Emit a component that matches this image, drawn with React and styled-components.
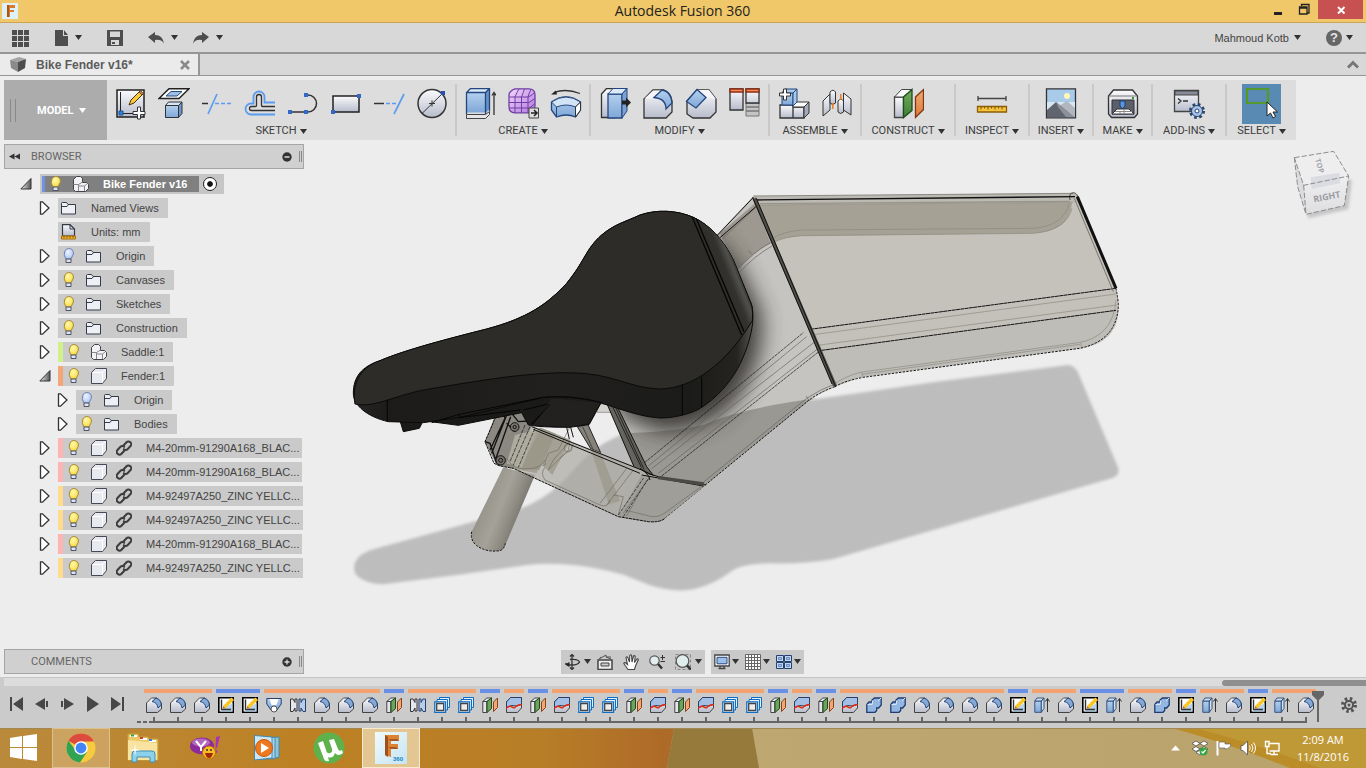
import React from 'react'
import styled, { createGlobalStyle } from 'styled-components'

const GlobalStyle = createGlobalStyle`
  * {
    box-sizing: border-box;
  }
  body {
    margin: 0;
    font-family: "Liberation Sans", Arial, sans-serif;
    font-size: 11px;
    color: #444;
    background: #ededed;
  }
  button {
    font: inherit;
    color: inherit;
    background: transparent;
    border: 0;
    padding: 0;
    cursor: pointer;
  }
  ul {
    list-style: none;
    margin: 0;
    padding: 0;
  }
  svg {
    display: block;
    flex: none;
  }
`

// gradients shared by all the icons
const Gradients = () => (
  <HiddenSvg width="0" height="0" aria-hidden="true">
    <defs>
      <linearGradient id="steel" x1="0" y1="0" x2="0" y2="1">
        <stop offset="0" stopColor="#fbfbfd" />
        <stop offset="1" stopColor="#b7bccb" />
      </linearGradient>
      <linearGradient id="sky" x1="0" y1="0" x2="0" y2="1">
        <stop offset="0" stopColor="#b4d0ee" />
        <stop offset="1" stopColor="#7fa7d8" />
      </linearGradient>
      <linearGradient id="violet" x1="0" y1="0" x2="1" y2="1">
        <stop offset="0" stopColor="#f3d6fb" />
        <stop offset="1" stopColor="#b377dd" />
      </linearGradient>
      <linearGradient id="green" x1="0" y1="0" x2="0" y2="1">
        <stop offset="0" stopColor="#74ad61" />
        <stop offset="1" stopColor="#3f7f33" />
      </linearGradient>
      <linearGradient id="orange" x1="0" y1="0" x2="0" y2="1">
        <stop offset="0" stopColor="#f3aa70" />
        <stop offset="1" stopColor="#dd7a3c" />
      </linearGradient>
      <radialGradient id="bulbOn" cx=".4" cy=".35" r=".7">
        <stop offset="0" stopColor="#fffbb0" />
        <stop offset="1" stopColor="#f8d838" />
      </radialGradient>
      <radialGradient id="bulbOff" cx=".4" cy=".35" r=".7">
        <stop offset="0" stopColor="#eef4ff" />
        <stop offset="1" stopColor="#a9c3f3" />
      </radialGradient>
      <linearGradient id="twist" x1="0" y1="0" x2="1" y2="0">
        <stop offset="0" stopColor="#eee" />
        <stop offset="1" stopColor="#555" />
      </linearGradient>
    </defs>
  </HiddenSvg>
)

const Svg = ({ size = 16, w, h, children, ...rest }) => (
  <svg width={w || size} height={h || size} viewBox={`0 0 ${w || size} ${h || size}`} fill="none" aria-hidden="true" {...rest}>
    {children}
  </svg>
)

const Caret = ({ color = '#333' }) => (
  <Svg w={7} h={5}><path d="M0 0h7L3.500 5z" fill={color} /></Svg>
)

const Gear = ({ cx, cy, r, color, hole, fill = 'none' }) => (
  <g>
    <circle cx={cx} cy={cy} r={r} stroke={color} strokeWidth="4" strokeDasharray={`${(r * Math.PI) / 8} ${(r * Math.PI) / 8}`} />
    <circle cx={cx} cy={cy} r={r - 2} fill={fill} stroke={color} strokeWidth="2" />
    <circle cx={cx} cy={cy} r="1.500" fill={hole} />
  </g>
)

// 32px toolbar icons
const big = {
  newSketch: (
    <>
      <path d="M2 2h27v27H2z" fill="url(#steel)" stroke="#222" strokeWidth="1.500" />
      <path d="M5.500 4v21.500H18" stroke="#222" />
      <path d="M4 23h4v4H4z" fill="#2d83d8" stroke="#1b559a" />
      <path d="M14 17l2-5L25 3l3 3-9 9z" fill="#f7c93c" stroke="#4a3205" />
      <path d="M24 4l1.500-1.500 3 3L27 7z" fill="#c37c4e" stroke="#4a3205" strokeWidth=".7" />
      <path d="M22.500 19h3v4.500H30v3h-4.500V31h-3v-4.500H18v-3h4.500z" fill="#fff" stroke="#333" />
    </>
  ),
  sketchPlane: (
    <>
      <path d="M1 10.500L11 .8h20l-10 9.700z" fill="#fff" stroke="#222" strokeWidth="1.500" />
      <path d="M8 8l5-4.500h11L19 8z" fill="#9fc0e6" stroke="#27497e" />
      <path d="M7.500 17.500h13v12h-13z" fill="url(#sky)" stroke="#333" />
      <path d="M7.500 17.500l3-3.500h13.500l-3.500 3.500z" fill="#d7e5f6" stroke="#333" />
      <path d="M20.500 17.500L24 14v11.500l-3.500 4z" fill="#6f96c8" stroke="#333" />
    </>
  ),
  trim: (
    <>
      <path d="M1 15.500h6" stroke="#333" strokeWidth="1.500" />
      <path d="M7 26L16 6" stroke="#5b9cf0" strokeWidth="1.700" />
      <path d="M14 15.500h17" stroke="#5b9cf0" strokeWidth="1.700" strokeDasharray="4 2" />
    </>
  ),
  offset: (
    <>
      <path d="M31 26.500H7a5.500 5.500 0 0 1 0-11h2.500V9a5.500 5.500 0 0 1 11 0v5.500H31" stroke="#5b9cf0" strokeWidth="1.800" />
      <path d="M31 22.500H7.500a2 2 0 0 1 0-4h4a1 1 0 0 0 1-1V9a2.500 2.500 0 0 1 5 0v8.500a1 1 0 0 0 1 1H31" stroke="#333" strokeWidth="1.300" />
    </>
  ),
  line: (
    <>
      <path d="M3 24h18a8.300 8.300 0 0 0 0-17h-2" stroke="#333" strokeWidth="1.500" />
      <path d="M1 22h4v4H1zM17 22h4v4h-4zM17 5h4v4h-4z" fill="#3468c8" />
    </>
  ),
  rect: (
    <>
      <path d="M3 8h26v16H3z" fill="url(#steel)" stroke="#222" strokeWidth="1.500" />
      <path d="M27 6h4v4h-4zM1 22h4v4H1z" fill="#3468c8" />
    </>
  ),
  extend: (
    <>
      <path d="M1 15.500h10" stroke="#333" strokeWidth="1.500" />
      <path d="M13 15.500h11" stroke="#5b9cf0" strokeWidth="1.700" strokeDasharray="4 2" />
      <path d="M21 26L31 6" stroke="#5b9cf0" strokeWidth="1.700" />
    </>
  ),
  circle: (
    <>
      <circle cx="16" cy="15.500" r="14" fill="url(#steel)" stroke="#333" strokeWidth="1.500" />
      <path d="M6 25.500L27 5M13 15.500h6M16 12.500v6" stroke="#333" />
      <path d="M25 3h4v4h-4z" fill="#2650b4" />
    </>
  ),
  extrude: (
    <>
      <path d="M2.500 26.500h19l4-3v3l-4 4h-19z" fill="#e6e6ea" stroke="#444" />
      <path d="M2.500 4.500h19v20h-19z" fill="url(#sky)" />
      <path d="M2.500 4.500l4-4h19l-4 4z" fill="#dce9f8" />
      <path d="M21.500 4.500l4-4v20l-4 5z" fill="#6791c8" />
      <path d="M2.500 26V4.500l4-4h19V23M2.500 4.500h19V26M21.500 4.500l4-4" stroke="#24467e" strokeWidth="1.300" />
      <path d="M30 27V5M28 7.500l2-3 2 3" stroke="#333" strokeWidth="1.300" />
    </>
  ),
  form: (
    <>
      <path d="M8 .8h14q6 0 6 6v11q0 4-3 7H8q-6 0-6-6V7q0-4 6-6.200z" fill="url(#violet)" stroke="#6d3fa5" strokeWidth="1.300" />
      <path d="M2.500 9h19q4-2 6.500-5M2 14.500h20l6-4M2.500 20h20l5-4M8 25V9q2-5 4-8M14.500 25V9q2-5 3-8M21 25V9q1-4 3-7.500" stroke="#6d3fa5" />
      <path d="M22 20h9.500v10H22z" fill="#ddd" stroke="#444" />
      <path d="M24 25h5M27 22l3 3-3 3" stroke="#222" strokeWidth="1.500" />
    </>
  ),
  revolve: (
    <>
      <path d="M1.500 14Q16 4 30.500 14v8l-5 7q-9-4-19 0l-5-7z" fill="url(#sky)" stroke="#24467e" strokeWidth="1.300" />
      <path d="M1.500 14Q16 4 30.500 14l-5 5q-9-4-19 0z" fill="#d3e4f6" stroke="#24467e" />
      <path d="M25.500 19l5-5v8l-5 7z" fill="#fff" stroke="#333" />
      <path d="M6.500 19v10" stroke="#24467e" />
      <path d="M30 5.500Q16 0 4 4.500" stroke="#333" strokeWidth="1.300" />
      <path d="M1 6.500l5-4 1 4z" fill="#222" />
    </>
  ),
  pressPull: (
    <>
      <path d="M2.500 6l5-5.500h8v29h-13z" fill="url(#steel)" stroke="#333" strokeWidth="1.300" />
      <path d="M9 6h14v24H9z" fill="url(#sky)" stroke="#24467e" strokeWidth="1.300" />
      <path d="M9 6l5-5.500h14L23 6z" fill="#dce9f8" stroke="#24467e" />
      <path d="M23 6l5-5.500V23l-5 7z" fill="#7ba1d3" stroke="#24467e" />
      <path d="M23 12.500h4V9.500l5 5-5 5v-3h-4z" fill="#222" />
    </>
  ),
  fillet: (
    <>
      <path d="M2 30V11l9-9h11q7 3 8 11v11l-6 6z" fill="url(#steel)" stroke="#333" strokeWidth="1.300" />
      <path d="M2.500 10.500L11 2.500h9l-8 8z" fill="#f6f6f8" />
      <path d="M12 9.500l8-7.500q9 1 10 13l-6 6q0-10.500-12-11.500z" fill="url(#sky)" stroke="#24467e" strokeWidth="1.300" />
    </>
  ),
  chamfer: (
    <>
      <path d="M2 13L12 2h12l7 9v13l-6 6H8l-6-4z" fill="url(#steel)" stroke="#333" strokeWidth="1.300" />
      <path d="M12 2h12l7 9-9-1z" fill="#f5f5f8" />
      <path d="M1.500 13.500L12 1.500l9 8L11 20z" fill="url(#sky)" stroke="#24467e" strokeWidth="1.300" />
    </>
  ),
  params: (
    <>
      <path d="M18 15h13v4H18zM18 19h13v4H18zM18 23h13v5H18z" fill="#c4c4c6" stroke="#777" />
      <path d="M2 1h13v21H2zM18 1h13v14H18z" fill="url(#steel)" stroke="#333" strokeWidth="1.300" />
      <path d="M2 1h13v3H2zM18 1h13v3H18z" fill="#ff8f54" stroke="#8a2a14" strokeWidth="1.300" />
    </>
  ),
  component: (
    <>
      <path d="M2 17h13v13H2zM15 19h11v11H15z" fill="url(#steel)" stroke="#333" strokeWidth="1.300" />
      <path d="M15 18l4-4h12l-5 5H15z" fill="#fff" stroke="#333" />
      <path d="M26 19l5-5v11l-5 5z" fill="#a5aabb" stroke="#333" />
      <path d="M4 5h11v12H4z" fill="url(#sky)" stroke="#24467e" />
      <path d="M4 5l3-4h12l-4 4zM15 5l4-4v13l-4 4z" fill="#a9c7ea" stroke="#24467e" />
      <path d="M5.500 1h3v4h4v3h-4v4h-3V8h-4V5h4z" fill="#fff" stroke="#333" />
    </>
  ),
  joint: (
    <>
      <path d="M2 13l7-7v16l-7 6z" fill="url(#steel)" stroke="#333" />
      <path d="M9 4q3-3.500 5.500 0v11q-3 3-5.500 0z" fill="url(#steel)" stroke="#333" />
      <path d="M17 13q3-3.500 5.500 0v11q-3 3-5.500 0z" fill="url(#steel)" stroke="#333" />
      <path d="M22.500 5l7.500 6v16l-7.500-5z" fill="url(#steel)" stroke="#333" />
      <path d="M11.800 15v6M19.800 6v6" stroke="#f07a1e" strokeWidth="1.500" />
    </>
  ),
  construct: (
    <>
      <path d="M2.500 9h9v20.500h-9z" fill="url(#steel)" stroke="#444" strokeWidth="1.300" />
      <path d="M2.500 9l7-7.500H20L11.500 9z" fill="#fafafa" stroke="#444" />
      <path d="M11.500 9L20 1.500v21l-8.500 7z" fill="url(#green)" stroke="#1f4d1a" strokeWidth="1.300" />
      <path d="M23.500 9L31.500 1.500v20l-8 8z" fill="url(#orange)" stroke="#7d3512" strokeWidth="1.300" />
    </>
  ),
  inspect: (
    <>
      <path d="M2 10.500h28M2 8v5M30 8v5" stroke="#444" strokeWidth="1.300" />
      <path d="M1.500 18.500h29V24h-29z" fill="#f4c53a" stroke="#8c5c08" strokeWidth="1.300" />
      <path d="M5 19v2.500M8.500 19v1.500M12 19v2.500M15.500 19v1.500M19 19v2.500M22.500 19v1.500M26 19v2.500" stroke="#7a5208" />
    </>
  ),
  insert: (
    <>
      <path d="M1.500 .8h29v29h-29z" fill="#a7cbe8" stroke="#333" strokeWidth="1.300" />
      <path d="M2 14h28v15H2z" fill="#d6e7f3" />
      <circle cx="22" cy="8" r="3" fill="#fff6b8" />
      <path d="M14 18l8-5 8 7v9H18z" fill="#b1b7bf" />
      <path d="M2 22l9-8 18 15H2z" fill="#60646e" />
      <path d="M11 14l18 15h-8L13 19z" fill="#8c919b" />
    </>
  ),
  make: (
    <>
      <path d="M1.500 8l5-6h19l5 6v18l-3 3.500h-23l-3-3.500z" fill="url(#steel)" stroke="#333" strokeWidth="1.300" />
      <path d="M1.500 8h29" stroke="#777" />
      <path d="M5 12h22v14H5z" fill="#5b5f6b" stroke="#333" />
      <path d="M5 26l5-5h12l5 5z" fill="#fff" stroke="#333" />
      <path d="M13 23v3M17 21v5M8 23.500h17" stroke="#888" />
      <path d="M13 13h5v5l-2.500 3L13 18z" fill="#5a95da" stroke="#1d3f78" />
      <path d="M25 9h2v2h-2z" fill="#2d9c2d" />
    </>
  ),
  addins: (
    <>
      <path d="M1.500 2.500h24v21h-24z" fill="url(#steel)" stroke="#444" strokeWidth="1.300" />
      <path d="M2 3h23v4H2z" fill="#878c98" stroke="#444" />
      <path d="M5 10.500l3 2.500-3 2.500M10 13h5" stroke="#333" strokeWidth="1.300" />
      <circle cx="24" cy="23" r="6.500" stroke="#27446f" strokeWidth="3" strokeDasharray="2.600 2.500" />
      <circle cx="24" cy="23" r="5.500" fill="#a8c4e8" stroke="#27446f" />
      <circle cx="24" cy="23" r="2" fill="#fff" stroke="#27446f" />
    </>
  ),
  select: (
    <>
      <path d="M1 1h21v14H1z" stroke="#53a000" strokeWidth="1.700" />
      <path d="M21 14v14l3.500-3 2.500 5 2.500-1.500-2.500-4.500h4.500z" fill="#fff" stroke="#222" />
    </>
  ),
}

const toolGroups = [
  { label: 'SKETCH', width: 350, tools: ['newSketch', 'sketchPlane', 'trim', 'offset', 'line', 'rect', 'extend', 'circle'] },
  { label: 'CREATE', width: 134, tools: ['extrude', 'form', 'revolve'] },
  { label: 'MODIFY', width: 179, tools: ['pressPull', 'fillet', 'chamfer', 'params'] },
  { label: 'ASSEMBLE', width: 92, tools: ['component', 'joint'] },
  { label: 'CONSTRUCT', width: 94, tools: ['construct'] },
  { label: 'INSPECT', width: 74, tools: ['inspect'] },
  { label: 'INSERT', width: 64, tools: ['insert'] },
  { label: 'MAKE', width: 59, tools: ['make'] },
  { label: 'ADD-INS', width: 74, tools: ['addins'] },
  { label: 'SELECT', width: 69, tools: ['select'] },
]

// 16px icons of the browser tree
const small = {
  bulbOn: (
    <>
      <path d="M3.500 5a4.500 4.500 0 1 1 8 2.800L10 11H5L3.500 7.800A4.500 4.500 0 0 1 3.500 5z" fill="url(#bulbOn)" stroke="#a8853a" />
      <path d="M5 11h5v3.500H5z" fill="#dfe3ee" stroke="#4f5565" />
    </>
  ),
  bulbOff: (
    <>
      <path d="M3.500 5a4.500 4.500 0 1 1 8 2.800L10 11H5L3.500 7.800A4.500 4.500 0 0 1 3.500 5z" fill="url(#bulbOff)" stroke="#6a80b4" />
      <path d="M5 11h5v3.500H5z" fill="#dfe3ee" stroke="#4f5565" />
    </>
  ),
  folder: (
    <>
      <path d="M.5 3.500Q.5 2.500 1.500 2.500H5.500L7 4.500h7.500v9.500H.5z" fill="#eef0f5" stroke="#333a48" />
      <path d="M.5 6.500H6L7.500 4.500" stroke="#333a48" />
    </>
  ),
  units: (
    <>
      <path d="M1.500 .7H9L13.500 5v7h-12z" fill="url(#steel)" stroke="#333a48" strokeWidth="1.200" />
      <path d="M9 .7V5h4.500" stroke="#333a48" />
      <path d="M.5 12h14v3H.5z" fill="#f4b92c" stroke="#a86c08" />
      <path d="M3 12v2M6 12v2M9 12v2M12 12v2" stroke="#8a5a08" />
    </>
  ),
  assembly: (
    <>
      <path d="M.5 3.500l3-3h4l2 2V6.500h4l2 2v4l-3 3h-10l-2-2z" fill="#f2f2f6" stroke="#444" />
      <path d="M.5 8.500h5l4-2.500M5.500 8.500v6.500M6 10h5.500l3-2.500M11.500 10v5" stroke="#888" />
    </>
  ),
  body: (
    <>
      <path d="M.5 4.500l4-4h11v10l-4 5H.5z" fill="#e9eaef" stroke="#444a55" />
      <path d="M1.500 4.500h10v10M11.500 4.500l3-3" stroke="#fff" />
    </>
  ),
  link: (
    <g stroke="#3c3c3c" strokeWidth="2" strokeLinecap="round">
      <path d="M7.500 5.500l3-3.200a2.700 2.700 0 0 1 4 3.700l-3 3.200a2.600 2.600 0 0 1-3.700 0" />
      <path d="M8.500 10.500l-3 3.200a2.700 2.700 0 0 1-4-3.700l3-3.200a2.600 2.600 0 0 1 3.700 0" />
    </g>
  ),
}

const tree = [
  { name: 'Named Views', level: 1, icons: ['folder'] },
  { name: 'Units: mm', level: 1, icons: ['units'], leaf: true },
  { name: 'Origin', level: 1, icons: ['bulbOff', 'folder'] },
  { name: 'Canvases', level: 1, icons: ['bulbOn', 'folder'] },
  { name: 'Sketches', level: 1, icons: ['bulbOn', 'folder'] },
  { name: 'Construction', level: 1, icons: ['bulbOn', 'folder'] },
  { name: 'Saddle:1', level: 1, icons: ['bulbOn', 'assembly'], bar: '#d0f08c' },
  { name: 'Fender:1', level: 1, icons: ['bulbOn', 'body'], bar: '#f4a677', open: true },
  { name: 'Origin', level: 2, icons: ['bulbOff', 'folder'] },
  { name: 'Bodies', level: 2, icons: ['bulbOn', 'folder'] },
  { name: 'M4-20mm-91290A168_BLAC...', level: 1, icons: ['bulbOn', 'body', 'link'], bar: '#ffb4b4', long: true },
  { name: 'M4-20mm-91290A168_BLAC...', level: 1, icons: ['bulbOn', 'body', 'link'], bar: '#ffb4b4', long: true },
  { name: 'M4-92497A250_ZINC YELLC...', level: 1, icons: ['bulbOn', 'body', 'link'], bar: '#ffdc8c', long: true },
  { name: 'M4-92497A250_ZINC YELLC...', level: 1, icons: ['bulbOn', 'body', 'link'], bar: '#ffdc8c', long: true },
  { name: 'M4-20mm-91290A168_BLAC...', level: 1, icons: ['bulbOn', 'body', 'link'], bar: '#ffb4b4', long: true },
  { name: 'M4-92497A250_ZINC YELLC...', level: 1, icons: ['bulbOn', 'body', 'link'], bar: '#ffdc8c', long: true },
]

// 16px icons of the timeline
const feature = {
  fillet: (
    <>
      <path d="M.5 15.500V6l5-5h5q4 2 5 6v5l-4 3.500z" fill="url(#steel)" stroke="#444" />
      <path d="M6 4.500L10 1q5 1.500 5.300 7L12 11q-.5-5.500-6-6.500z" fill="#86a9d8" stroke="#24467e" />
    </>
  ),
  sketch: (
    <>
      <path d="M.8 .8h14.400v14.400H.8z" fill="#fff" stroke="#000" strokeWidth="1.600" />
      <path d="M2 14.500L14.500 6v8.500z" fill="#b4d3ee" />
      <path d="M3.500 2.500v10H13" stroke="#333" strokeWidth="1.400" />
      <path d="M5.500 11V8.500l8-8L16 3 8 11z" fill="#f9c624" />
      <path d="M5 11.500V9l2.500 2.500z" fill="#a9662c" />
    </>
  ),
  loft: (
    <>
      <path d="M.8 1.500h14.400V7L11 13H5L.8 7z" fill="url(#sky)" stroke="#27416e" />
      <path d="M3.500 2l2 6h5l2-6z" fill="#fff" />
      <circle cx="8" cy="12" r="3" fill="#fff" stroke="#555" />
    </>
  ),
  mirror: (
    <>
      <path d="M.5 2h2.500l2 3.500V2h2v12h-2V11l-2 3.500H.5z" fill="#e5e7ee" stroke="#333" />
      <path d="M15.500 2H13l-2 3.500V2H9v12h2V11l2 3.500h2.500z" fill="#b7cdea" stroke="#27416e" />
    </>
  ),
  plane: (
    <>
      <path d="M.8 4.500h4v11h-4zM.8 4.500l4-3.500h5L5 4.500z" fill="#e3e5ea" stroke="#444" />
      <path d="M5 4.500L9.500 1v10.500l-4.500 4z" fill="#6da35f" stroke="#1f4d1a" />
      <path d="M11.500 5l4-4v9.500l-4 4z" fill="#f0a876" stroke="#8a4216" />
    </>
  ),
  pattern: (
    <>
      <path d="M5.500 .5h10v10h-10z" fill="#e8f1fa" stroke="#0d6cc4" />
      <path d="M3 2.500h10.500V13H3z" fill="#e8f1fa" stroke="#0d6cc4" />
      <path d="M.8 4.800h10.700v10.500H.8z" fill="#fff" stroke="#0d6cc4" strokeWidth="1.300" />
      <path d="M2.700 6.500h7v7h-7z" fill="#ececec" stroke="#444" strokeWidth="1.300" />
    </>
  ),
  split: (
    <>
      <path d="M.5 5l4-4.500h11v10.500l-4 4.500H.5z" fill="url(#steel)" stroke="#444" />
      <path d="M.5 5l4-4.500h11V7L11 9 6 8.500.5 10.500z" fill="#a3bfe4" stroke="#27416e" />
      <path d="M0 11l4-2 4 2 3.500-2.500L16 7.500" stroke="#e0280e" strokeWidth="1.500" />
    </>
  ),
  combine: (
    <>
      <path d="M.8 7.500L3 5h3V3l2.500-2h6.700v7l-2.500 3h-2v2.500L9 15.300H.8z" fill="#93b6e3" stroke="#1e3c70" strokeWidth="1.300" />
      <path d="M1.500 7.500H6M6.500 3.500v4M12 4l3-3" stroke="#d5e5f8" />
    </>
  ),
  extrude: (
    <>
      <path d="M.8 4h6.500v11.300H.8z" fill="url(#sky)" stroke="#37547f" />
      <path d="M.8 4L3 1h7L7.300 4zM7.300 4L10 1v10.500l-2.700 3.800z" fill="#cfdff2" stroke="#37547f" />
      <path d="M13.500 15V2M11.500 4.500l2-3 2 3" stroke="#333" />
    </>
  ),
}

const timeline = [
  ['solid', 'fillet fillet fillet'],
  ['plan', 'sketch sketch'],
  ['solid', 'loft mirror fillet fillet fillet'],
  ['plan', 'plane'],
  ['solid', 'mirror pattern pattern'],
  ['plan', 'plane'],
  ['solid', 'split'],
  ['plan', 'plane'],
  ['solid', 'split pattern pattern'],
  ['plan', 'plane'],
  ['solid', 'split'],
  ['plan', 'plane'],
  ['solid', 'split pattern pattern'],
  ['plan', 'plane'],
  ['solid', 'split'],
  ['plan', 'plane'],
  ['solid', 'split combine combine fillet fillet fillet fillet'],
  ['plan', 'sketch'],
  ['solid', 'extrude fillet'],
  ['plan', 'sketch extrude'],
  ['solid', 'fillet combine'],
  ['plan', 'sketch'],
  ['solid', 'extrude fillet'],
  ['plan', 'sketch'],
  ['solid', 'extrude fillet'],
]

const playback = [
  ['Go to start', 'M1 1v14h2V1zM14 1L4 8l10 7z'],
  ['Step back', 'M11 2L1 8l10 6zM12 5h2v6h-2z'],
  ['Step forward', 'M5 2l10 6-10 6zM2 5h2v6H2z'],
  ['Play', 'M3 0l12 8-12 8z'],
  ['Go to end', 'M2 1l10 7-10 7zM13 1h2v14h-2z'],
]

const Model = () => (
  <ModelSvg viewBox="-108 -108 3186 1515" role="img" aria-label="Bike Fender model">
    <defs>
      <filter id="soft" x="-5%" y="-10%" width="110%" height="120%"><feGaussianBlur stdDeviation="5" /></filter>
      <filter id="wide" x="-20%" y="-20%" width="140%" height="140%"><feGaussianBlur stdDeviation="32" /></filter>
      <clipPath id="midClip"><path d="M1240 48L1485 620 1410 660 1095 915 920 885 800 660 1000 300 1130 165z" /></clipPath>
      <linearGradient id="post" x1="430" y1="960" x2="545" y2="1005" gradientUnits="userSpaceOnUse">
        <stop offset="0" stopColor="#96938a" />
        <stop offset=".45" stopColor="#a5a299" />
        <stop offset=".75" stopColor="#8f8c84" />
        <stop offset="1" stopColor="#77756e" />
      </linearGradient>
      <linearGradient id="back" x1="1115" y1="300" x2="1195" y2="268" gradientUnits="userSpaceOnUse">
        <stop offset="0" stopColor="#2b2a27" />
        <stop offset=".6" stopColor="#33322f" />
        <stop offset=".85" stopColor="#50504c" />
        <stop offset="1" stopColor="#34332f" />
      </linearGradient>
      <linearGradient id="side" x1="0" y1="0" x2="1240" y2="0" gradientUnits="userSpaceOnUse">
        <stop offset="0" stopColor="#2b2a28" />
        <stop offset=".12" stopColor="#1c1b1a" />
        <stop offset=".5" stopColor="#21201e" />
        <stop offset=".85" stopColor="#1b1b19" />
        <stop offset=".96" stopColor="#252421" />
        <stop offset="1" stopColor="#55544f" />
      </linearGradient>
      <linearGradient id="cubeShade" x1="0" y1="0" x2="0" y2="1">
        <stop offset="0" stopColor="#efeff0" />
        <stop offset="1" stopColor="#dedee1" />
      </linearGradient>
    </defs>

    {/* ground shadow */}
    <path
      filter="url(#soft)" fill="#bdbdbd"
      d="M100 1108L400 1025 545 985Q640 945 700 870 760 800 830 770 900 742 990 752 1110 735 1200 698 1290 676 1410 660L1780 607 2185 555Q2205 557 2215 580L2335 865Q2340 885 2320 893L2100 957 1480 1137Q1400 1152 1290 1150 1210 1152 1180 1170 1120 1215 1060 1228 1000 1238 930 1216 880 1195 850 1184 760 1160 700 1155 620 1148 560 1155L350 1185 130 1213Q70 1212 45 1180 30 1130 100 1108z"
    />

    {/* rear panel */}
    <path fill="#c5c2bb" d="M1240 48L2200 40 2212 45 2328 325Q2345 390 2325 440 2290 495 2220 505L1560 592 1485 620z" />
    <path fill="#bebdb8" d="M1445 511L2328 391Q2335 490 2220 505L1560 592Q1515 604 1485 620z" />
    <path fill="#c3c1ba" d="M1410 448L2325 325 2328 391 1445 511z" />
    <path fill="#a5a194" d="M1252 75L2196 68Q2190 155 2080 160L1380 168Q1330 172 1300 187z" />
    <path fill="#bcbab3" d="M1240 48L2200 40 2212 45 2212 68 1255 75z" />
    <g fill="none" stroke="#8b897e" strokeWidth="2">
      <path d="M1255 75L2200 67M1292 178Q1330 152 1395 150L2075 145Q2170 140 2188 70M1300 187Q1340 168 1390 167L2080 160Q2180 150 2196 85" />
      <path d="M1260 71L2190 64" strokeWidth="4" stroke="#98968b" />
      <path d="M1420 464L2328 342M1440 495L2330 375M1560 577L2215 488Q2320 470 2328 360M1565 583L2220 493M1485 610Q1515 590 1560 577M1565 577l4 15M2222 489l4 14" />
    </g>
    <g fill="none" stroke="#111" strokeWidth="3">
      <path d="M1245 60L2205 50" strokeWidth="4" />
      <path d="M1240 48L2200 40" stroke="#8b8a84" />
      <path d="M1410 448L2328 325M1445 511L2328 391" strokeDasharray="12 1" />
      <path d="M1485 620Q1515 602 1570 592L2220 505Q2335 480 2335 370 2332 345 2328 325" strokeDasharray="7 4" />
      <path d="M2212 50L2328 325" strokeWidth="9" />
      <path d="M2203 55L2320 335" strokeWidth="3" stroke="#77756c" />
      <path d="M2190 60q-5-22 12-22 14 4 10 20" strokeWidth="2" />
    </g>

    {/* middle panel */}
    <path fill="#c5c4c1" d="M1240 48L1485 620Q1440 640 1410 660L1095 915 920 885 800 660 1000 300 1130 165z" />
    <path fill="#9a9893" d="M850 760Q1000 755 1090 735 1200 685 1430 655L1410 660 1095 915 920 885z" />
    <path fill="#9d9990" d="M1140 160L1245 70 1292 190Q1240 215 1190 272z" />
    <g clipPath="url(#midClip)">
      <path filter="url(#wide)" fill="#3a3936" opacity=".95" d="M1130 170L1205 270 1265 400Q1280 560 1165 690 1080 760 960 760L830 700 900 300z" />
    </g>
    <g fill="none" stroke="#63625c" strokeWidth="2">
      <path d="M1145 178L1245 85M1190 272Q1240 215 1292 188M1196 280Q1240 230 1296 198M925 858L1400 470M935 866L1425 485M955 880L1435 505M1485 612Q1440 628 1400 655L1092 905M1398 648l12 16M1225 212l10 10" />
    </g>
    <g fill="none" stroke="#111" strokeWidth="3">
      <path d="M1130 168L1240 52M1140 173L1250 78" />
      <path d="M905 855L1390 458M965 888L1440 512" strokeDasharray="10 2" strokeWidth="2" />
      <path d="M1485 620Q1435 638 1405 662L970 1018" strokeDasharray="7 4" />
      <path d="M1243 55L1485 618" strokeWidth="12" stroke="#504f48" />
      <path d="M1238 52L1476 612M1249 55L1487 620" strokeWidth="3" />
    </g>

    {/* seat post */}
    <path fill="url(#post)" d="M490 862L395 1055Q390 1080 410 1097 440 1118 480 1112 492 1108 496 1095L585 885z" />
    <path fill="none" stroke="#111" strokeWidth="3" strokeDasharray="7 4" d="M395 1055Q390 1080 410 1097 440 1118 480 1112 492 1108 496 1090" />

    {/* struts */}
    <path fill="#d3d2cd" stroke="#777" strokeWidth="2" d="M760 672h60l-8 25h-40z" />
    <path fill="#85827a" stroke="#222" strokeWidth="3" d="M712 740l32-6 38 84-30-12z" />
    <path fill="#8d8a7c" d="M752 806l30 12 58 145-34 10z" />
    <path fill="none" stroke="#444" strokeWidth="3" d="M728 740L762 815" />
    <path fill="#66645e" stroke="#111" strokeWidth="3" d="M802 674l30 6L920 860l20 26-58-26z" />
    <path fill="none" stroke="#222" strokeWidth="3" d="M818 680L904 862M826 680L912 868" />

    {/* front bracket */}
    <path fill="#a9a79d" fillOpacity=".68" d="M570 735L905 868 925 885 1097 915 970 1018Q960 1028 925 1025L835 1010 520 865z" />
    <path fill="#8a8883" fillOpacity=".4" d="M905 885L1097 915 970 1018Q960 1028 925 1025L835 1010z" />
    <path fill="#a5a295" d="M600 742l92 38-55 105-25-25-10-20-12 40-80-15 25-60z" />
    <path fill="#9b9889" d="M605 745l42 16-50 110-60-5z" />
    <path fill="#8a8880" d="M490 698L555 690 575 738 520 865 470 855 435 785 462 715z" />
    <path fill="#aeac9f" d="M525 765L590 750 545 865 500 850z" />
    <g fill="none" stroke="#6f6d63" strokeWidth="2">
      <path d="M615 862Q600 880 615 900L780 975Q805 985 810 960M605 855q15 5 10-10l10-25 30-10 45-90M500 835q20 40 80 30 25-5 35-25M850 1000L930 890M800 975L880 870M780 970L860 865M855 990l80 20q25 2 45-15L1090 915M920 900L860 1008" />
      <path d="M640 840q30-35 50-55l-5 25-60 60zM700 790l-5 15-35 30" />
      <circle cx="684" cy="804" r="12" />
      <path d="M820 945l30 5-15 55" />
    </g>
    <g fill="none" stroke="#111" strokeWidth="3">
      <path d="M490 698Q462 712 460 728L435 785 462 850 480 858 520 865 835 1010 925 1025Q960 1028 975 1015" strokeDasharray="9 2" />
      <path d="M575 740L905 870Q925 880 930 900M580 748L900 880" />
      <path d="M900 865Q925 885 955 890L1097 915M905 885L1090 918" />
      <path d="M955 893L1092 912" strokeWidth="10" stroke="#4b4a44" />
      <path d="M835 1005L910 895M850 1010L925 897" strokeDasharray="10 4" strokeWidth="2" />
      <path d="M570 740L520 855M585 745L535 862M555 735L510 845" strokeDasharray="12 3" strokeWidth="2" />
      <path d="M500 705L455 820M512 710L468 835M490 700l5 15-45 95M435 785l15 5 20 60M500 730l25 25M515 700l20 25 30-2" strokeWidth="4" />
      <path d="M680 742l8 35M692 742l8 30" />
    </g>
    <g stroke="#111" strokeWidth="3" fill="#77756d">
      <circle cx="524" cy="741" r="13" />
      <circle cx="524" cy="741" r="5" />
      <circle cx="482" cy="841" r="14" />
      <circle cx="482" cy="841" r="6" />
    </g>

    {/* saddle */}
    <path fill="#1a1a18" stroke="#0a0a0a" strokeWidth="3" d="M180 722l10 33 48-10 10-20zM250 722L355 736 545 698 565 735Q600 742 690 742L748 733 785 665 610 640z" />
    <path
      fill="url(#side)" stroke="#0a0a0a" strokeWidth="3"
      d="M40 640C40 590 65 560 120 542C200 508 330 475 440 447C560 415 620 375 680 310C740 235 735 210 785 165C825 132 850 128 900 105C950 88 1010 90 1060 112C1110 135 1150 180 1180 240L1235 375Q1240 395 1238 430C1225 520 1180 620 1085 682C1060 700 1000 715 960 714C900 710 850 690 780 668C740 652 650 646 610 652L360 712 250 728 145 725C80 710 40 675 40 640z"
    />
    <path
      fill="#2d2c28" stroke="#0a0a0a" strokeWidth="3"
      d="M45 672C35 620 55 562 120 542C200 508 330 475 440 447C560 415 620 375 680 310C740 235 735 210 785 165C825 132 850 128 900 105C950 88 1010 90 1060 112C1110 135 1150 180 1180 240L1235 375Q1240 395 1237 422C1160 550 1060 625 960 627C880 625 830 590 740 581C600 568 400 605 250 630C160 648 100 685 45 672z"
    />
    <path fill="url(#back)" d="M1062 116C1110 135 1150 180 1180 240L1233 375Q1238 395 1235 422L1208 462z" />
    <path fill="none" stroke="#050505" strokeWidth="4" d="M1057 112L1205 465M1069 116L1212 455" />
    <path fill="none" stroke="#050505" strokeWidth="3" d="M142 660V724M1027 614V706M1085 590V682M275 728L358 703 610 652M358 703v10L540 690M630 672L575 732M625 672L550 690" />
    <path fill="#222120" d="M635 655L780 668 745 730 690 740 580 735z" />
    <path fill="none" stroke="#080808" strokeWidth="3" d="M630 672L578 733M610 652Q700 645 785 668" />

    {/* view cube */}
    <g strokeLinejoin="round">
      <path filter="url(#soft)" fill="#c6c6c8" d="M2870 -30L2905 115 3025 88 3036 0z" />
      <path fill="#eeeeef" d="M2863-67L2981-86 3026-12 2891 16z" />
      <path fill="#dcdcde" d="M2863-67L2891 16 2898 103 2873 20z" />
      <path fill="url(#cubeShade)" d="M2891 16L3026-12 3013 77 2898 103z" />
      <path fill="#dadce2" d="M2912-8L2998-22 3000 10 2915 27z" />
      <path fill="none" stroke="#8d8d90" strokeWidth="3" strokeDasharray="16 6" d="M2863-67L2981-86 3026-12 2891 16zM2863-67L2873 20 2898 103 3013 77 3026-12M2891 16L2898 103" />
      <CubeText x="2960" y="60" transform="rotate(-11 2960 48)">RIGHT</CubeText>
      <CubeText x="2940" y="-34" transform="rotate(73 2940 -43)" $light>TOP</CubeText>
    </g>
  </ModelSvg>
)

const TreeRow = ({ item }) => (
  <Row $level={item.level}>
    <Twisty type="button" aria-label={item.leaf ? undefined : 'Toggle ' + item.name} disabled={item.leaf}>
      {!item.leaf && (item.open
        ? <Svg w={12} h={14}><path d="M11 1.500v10.500H.8z" fill="url(#twist)" stroke="#333" /></Svg>
        : <Svg w={12} h={14}><path d="M1.500 .8h2L10 7l-6.500 6.200h-2z" fill="#fff" stroke="#333" strokeWidth="1.300" /></Svg>)}
    </Twisty>
    <Item $bar={item.bar} $long={item.long}>
      {item.icons.map((n) => <Svg key={n}>{small[n]}</Svg>)}
      <ItemName>{item.name}</ItemName>
    </Item>
  </Row>
)

const App = () => {
  return (
    <Page>
      <GlobalStyle />
      <Gradients />
      <TitleBar>
        <Svg>
          <path d="M0 0h16v16H0z" fill="#dff1f8" />
          <path d="M5 2h8v3H8v2h4v2H8v5H5z" fill="#d97a2c" />
          <path d="M5 2h2v12H5z" fill="#a8551a" />
        </Svg>
        <Title>Autodesk Fusion 360</Title>
        <WindowButtons>
          <WinButton aria-label="Minimize"><Svg><path d="M3 10h8v3H3z" fill="#222" /></Svg></WinButton>
          <WinButton aria-label="Restore"><Svg><path d="M4.500 4V2.500H12V11h-1.500M2.500 5H10v7H2.500zM2.500 6H10" stroke="#222" strokeWidth="1.300" /></Svg></WinButton>
          <WinButton aria-label="Close" $close><Svg><path d="M5 5l6.500 6.500M11.500 5L5 11.500" stroke="#fff" strokeWidth="2" /></Svg></WinButton>
        </WindowButtons>
      </TitleBar>

      <QuickBar>
        <QuickButton aria-label="Data panel">
          <Svg size={18}><path d="M1 1h5v5H1zM7 1h5v5H7zM13 1h5v5h-5zM1 7h5v5H1zM7 7h5v5H7zM13 7h5v5h-5zM1 13h5v5H1zM7 13h5v5H7zM13 13h5v5h-5z" fill="#4e4e4e" /></Svg>
        </QuickButton>
        <QuickButton aria-label="File">
          <Svg w={14} h={16}><path d="M1 0h8v6h5v10H1zM10 0l4 5h-4z" fill="#4e4e4e" /></Svg><Caret />
        </QuickButton>
        <QuickButton aria-label="Save">
          <Svg><path d="M0 0h16v16H0z" fill="#4e4e4e" /><path d="M3 1.500h10v5.500H3zM4 10h8v5H4z" fill="#d8d8d8" /><path d="M5 12h3v2H5z" fill="#4e4e4e" /></Svg>
        </QuickButton>
        <History>
          <QuickButton aria-label="Undo">
            <Svg><path d="M0 7l7-5v3q8 0 9 9-2-5-9-4v3z" fill="#4e4e4e" /></Svg><Caret />
          </QuickButton>
          <QuickButton aria-label="Redo">
            <Svg><path d="M16 7L9 2v3q-8 0-9 9 2-5 9-4v3z" fill="#4e4e4e" /></Svg><Caret />
          </QuickButton>
        </History>
        <Spacer />
        <UserButton>Mahmoud Kotb <Caret /></UserButton>
        <HelpButton aria-label="Help">
          <HelpDot>?</HelpDot><Caret />
        </HelpButton>
      </QuickBar>

      <TabBar>
        <Tab>
          <Svg w={18} h={16}>
            <path d="M1 3l9-3 7 2-8 3z" fill="#a5a5a5" />
            <path d="M1 3l8 2v10l-7-4z" fill="#8a8a8a" />
            <path d="M9 5l8-3-1 9-7 4z" fill="#4d4d4d" />
          </Svg>
          <TabName>Bike Fender v16*</TabName>
          <TabClose aria-label="Close tab"><Svg size={10}><path d="M1 1l8 8M9 1L1 9" stroke="#8a8a8a" strokeWidth="2.500" /></Svg></TabClose>
        </Tab>
        <Collapse aria-label="Collapse toolbar"><Svg w={12} h={9}><path d="M1 7.500l5-5 5 5" stroke="#777" strokeWidth="3" /></Svg></Collapse>
      </TabBar>

      <Workspace>
        <Toolbar>
          <ModelButton>MODEL <Caret color="#fff" /></ModelButton>
          {toolGroups.map(({ label, width, tools }) => (
            <Group key={label} $width={width}>
              <Tools>
                {tools.map((t) => (
                  <Tool key={t} aria-label={t} $active={t === 'select'}><Svg size={32}>{big[t]}</Svg></Tool>
                ))}
              </Tools>
              <GroupLabel>{label} <Caret /></GroupLabel>
            </Group>
          ))}
        </Toolbar>

        <Body>
          <Browser>
            <PanelHeader>
              <Svg w={11} h={8}><path d="M5.500 .5v6L0 3.500zM11 .5v6L5.500 3.500z" fill="#333" /></Svg>
              <PanelTitle>BROWSER</PanelTitle>
              <PanelButton aria-label="Collapse all"><Svg size={10}><circle cx="5" cy="5" r="4.700" fill="#333" /><path d="M2.500 5h5" stroke="#ddd" strokeWidth="1.500" /></Svg></PanelButton>
              <Grip />
            </PanelHeader>
            <Tree>
              <Row $level={0}>
                <Twisty aria-label="Toggle Bike Fender v16"><Svg w={12} h={14}><path d="M11 1.500v10.500H.8z" fill="url(#twist)" stroke="#333" /></Svg></Twisty>
                <RootItem>
                  <RootName>
                    <Svg>{small.bulbOn}</Svg>
                    <Svg>{small.assembly}</Svg>
                    <b>Bike Fender v16</b>
                  </RootName>
                  <input type="radio" name="active-component" aria-label="Activate Bike Fender v16" defaultChecked />
                </RootItem>
              </Row>
              {tree.map((item, i) => <TreeRow key={i} item={item} />)}
            </Tree>
          </Browser>
          <Model />
        </Body>

        <BottomRow>
          <PanelHeader>
            <Svg w={11} h={8} />
            <PanelTitle>COMMENTS</PanelTitle>
            <PanelButton aria-label="Add comment"><Svg size={10}><circle cx="5" cy="5" r="4.700" fill="#333" /><path d="M2.500 5h5M5 2.500v5" stroke="#ddd" strokeWidth="1.300" /></Svg></PanelButton>
            <Grip />
          </PanelHeader>
          <NavBars>
            <NavBar $gap={10}>
              <NavButton aria-label="Orbit" $tight>
                <Svg><path d="M8 0v16M6 2.500L8 .5l2 2M6 13.500l2 2 2-2M6 5.500q8-1 9.500 2.500-1 3-8 3-5 0-6-2" stroke="#333" strokeWidth="1.300" /><path d="M1 10.500L5.500 8v5z" fill="#222" /></Svg>
                <Caret />
              </NavButton>
              <NavButton aria-label="Look at"><Svg><path d="M1 6h14v9.500H1z" fill="#eee" stroke="#444" strokeWidth="1.500" /><path d="M4 9h8v3H4z" fill="#ccc" stroke="#444" /><path d="M2 5l7-4v2h5M2 5l2-2M9 3l5 2" stroke="#555" /></Svg></NavButton>
              <NavButton aria-label="Pan"><Svg><path d="M5 15.500L.8 9.500q.5-1.500 2-.5L4.500 10.500 3 3.500q.8-1.500 1.800 0L6.500 8 6.800 1.500q1-1.500 1.800 0L9 8l1.500-6q1.200-1 1.700.5L11.500 8.500 14 5q1.300-.5 1.200 1L12.500 12 11.500 15.500z" fill="#fff" stroke="#444" strokeWidth="1.100" /></Svg></NavButton>
              <NavButton aria-label="Zoom"><Svg><circle cx="5.500" cy="6.500" r="4.700" fill="#e2eeee" stroke="#555" strokeWidth="1.200" /><path d="M9 10l4 4.500" stroke="#333" strokeWidth="2.500" /><path d="M11.500 3.500h4.500M13.500 1v5M11.500 7.500h4.500" stroke="#333" /></Svg></NavButton>
              <NavButton aria-label="Fit">
                <Svg><path d="M.5 .5h15v15H.5z" stroke="#888" strokeDasharray="3 2" /><circle cx="7.500" cy="7" r="6.300" fill="#dfeeed" stroke="#555" strokeWidth="1.200" /><path d="M12 11.500l4 4" stroke="#333" strokeWidth="2.500" /></Svg>
                <Caret />
              </NavButton>
            </NavBar>
            <NavBar $gap={6}>
              <NavButton aria-label="Display settings" $close>
                <Svg><path d="M.8 1h14.400v11H.8z" fill="#fff" stroke="#444" strokeWidth="1.300" /><path d="M3 3.300h10v6.500H3z" fill="#9cc0ea" stroke="#27497e" /><path d="M6 12v2.500H4.500h7H10V12" stroke="#444" strokeWidth="1.300" /></Svg>
                <Caret />
              </NavButton>
              <NavButton aria-label="Grid and snaps" $close>
                <Svg><path d="M.5 .5h15v15H.5z" fill="#fff" /><path d="M.5 .5h15v15H.5zM3.500 0v16M6.500 0v16M9.500 0v16M12.500 0v16M0 3.500h16M0 6.500h16M0 9.500h16M0 12.500h16" stroke="#666" /></Svg>
                <Caret />
              </NavButton>
              <NavButton aria-label="Viewports" $close>
                <Svg><path d="M.5 1.500h7v6h-7zM8.500 1.500h7v6h-7zM.5 8.500h7v6h-7zM8.500 8.500h7v6h-7z" fill="#c3d6f0" stroke="#27416e" /><path d="M2.500 3.500h3v2h-3zM10.500 3.500h3v2h-3zM2.500 10.500h3v2h-3zM10.500 10.500h3v2h-3z" fill="#a5c0e4" stroke="#6a8cc0" /></Svg>
                <Caret />
              </NavButton>
            </NavBar>
          </NavBars>
        </BottomRow>
      </Workspace>

      <Timeline>
        <ScrollTrack><ScrollThumb /></ScrollTrack>
        <TimelineRow>
          <Playback>
            {playback.map(([name, d]) => (
              <button key={name} aria-label={name}><Svg><path d={d} fill="#474747" /></Svg></button>
            ))}
          </Playback>
          <Track>
            <Features>
              {timeline.map(([kind, names], i) => (
                <FeatureGroup key={i} $kind={kind}>
                  {names.split(' ').map((n, j) => (
                    <Feature key={j} aria-label={n}><Svg>{feature[n]}</Svg></Feature>
                  ))}
                </FeatureGroup>
              ))}
            </Features>
            <Axis><i /><i /><span /></Axis>
          </Track>
          <Svg w={12} h={34}><path d="M0 2h12v4L7 11v22H5V11L0 6z" fill="#666" /></Svg>
          <Settings aria-label="Timeline settings"><Svg size={18}><Gear cx={9} cy={9} r={6} color="#555" hole="#555" /></Svg></Settings>
        </TimelineRow>
      </Timeline>

      <TaskBar>
        <Wallpaper viewBox="0 0 1366 40" preserveAspectRatio="none" aria-hidden="true">
          <defs>
            <linearGradient id="sand"><stop offset="0" stopColor="#ba8a3c" /><stop offset=".45" stopColor="#bd8124" /><stop offset=".8" stopColor="#b87e27" /><stop offset="1" stopColor="#ad6928" /></linearGradient>
            <linearGradient id="pale"><stop offset="0" stopColor="#c2ab76" /><stop offset="1" stopColor="#baa36b" /></linearGradient>
          </defs>
          <path d="M0 0h1366v40H0z" fill="url(#pale)" />
          <path d="M0 0h674l-7 40H0z" fill="url(#sand)" />
          <path d="M674 0h78l7 40h-92z" fill="#967a3b" />
          <path d="M1172 0Q1230 16 1290 40h76V0z" fill="#bb8d29" />
          <path d="M1195 0Q1250 14 1320 40h46V0z" fill="#c09937" />
          <path d="M0 0h1366v1H0z" fill="#a08855" />
        </Wallpaper>
        <StartButton aria-label="Start"><Svg w={28} h={28}><path d="M0 4l12-2v11H0zM13 2l14-2v13H13zM0 14h12v11L0 23zM13 14h14v13l-14-2z" fill="#fff" /></Svg></StartButton>
        <TaskButton aria-label="Chrome" $open>
          <Svg size={30}>
            <circle cx="15" cy="15" r="14.500" fill="#f7cb3e" />
            <path d="M15 15L2.400 7.800A14.500 14.500 0 0 1 27.600 7.800L27.600 8.500H15z" fill="#dd4b3e" />
            <path d="M2.400 7.800A14.500 14.500 0 0 0 14 29.500L21 19 15 15 9.500 17z" fill="#31a354" />
            <circle cx="15" cy="15" r="6.800" fill="#fff" />
            <circle cx="15" cy="15" r="5.400" fill="#4286f5" />
          </Svg>
        </TaskButton>
        <TaskButton aria-label="File Explorer">
          <Svg w={32} h={30}>
            <path d="M1 5V1h10l1 3h9l1 2h9v21H1z" fill="#ecc866" stroke="#c9a040" />
            <path d="M3 2h7v2H3zM13 5h7v2h-7zM22 7h7v2h-7z" fill="#fff" />
            <path d="M4 1.500h3v2H4z" fill="#2aa83a" /><path d="M13 4h3v2h-3z" fill="#d0402a" /><path d="M22 6h3v2h-3z" fill="#3a7ad0" />
            <path d="M1 7l29 3v17H1z" fill="#f8e3a0" />
            <path d="M5 29V21q0-3 3-3h17q3 0 3 3v8h-5v-5H10v5z" fill="#8dd0ea" stroke="#3d8fb8" />
            <path d="M8 11l.8 5.200L14 17l-5.200.8L8 23l-.8-5.200L2 17l5.200-.8z" fill="#fff" />
          </Svg>
        </TaskButton>
        <TaskButton aria-label="Yahoo Messenger">
          <Svg w={32} h={26}>
            <ellipse cx="13" cy="11" rx="12" ry="8.500" fill="#8d2b9a" />
            <ellipse cx="12" cy="7.500" rx="9" ry="4" fill="#c583cf" opacity=".7" />
            <path d="M7 6l5 6v4M17 6l-5 6" stroke="#fff" strokeWidth="2" />
            <path d="M27 2l4-1-3 12-1.500.5z" fill="#a832b8" /><circle cx="26.500" cy="16.500" r="1.800" fill="#a832b8" />
            <circle cx="20" cy="17.500" r="6.500" fill="#f9bc22" stroke="#b87010" />
            <path d="M16 18h8q-1 5-4 5t-4-5z" fill="#a02a10" /><path d="M18 14v2M22 14v2" stroke="#333" strokeWidth="1.500" />
          </Svg>
        </TaskButton>
        <TaskButton aria-label="Media Player">
          <Svg size={28}>
            <path d="M8 4l18-1v20l-6 2z" fill="#8cc5e0" stroke="#4388ab" />
            <path d="M5 2.500l17 1v21l-17 1z" fill="#a9d5ea" stroke="#4388ab" />
            <path d="M1.500 1.500L19 3v21L1.500 26z" fill="#cfe7f3" stroke="#4388ab" />
            <circle cx="11" cy="14" r="8.500" fill="#ee7a1d" stroke="#c9570d" />
            <path d="M8 9l8 5-8 5z" fill="#fff" />
          </Svg>
        </TaskButton>
        <TaskButton aria-label="uTorrent">
          <Svg size={32}>
            <circle cx="16" cy="16" r="15.500" fill="#5fb14b" />
            <path d="M5 11l5-2 3 9q1 4 4 3t2-4L16 8l5-1 4 10q1 3 4 1l1 3q-5 4-8 0-2 6-7 4l1 4q-4 1-5-2z" fill="#fff" />
          </Svg>
        </TaskButton>
        <TaskButton aria-label="Fusion 360" $open $active>
          <FusionTile>
            <Svg w={32} h={32}>
              <path d="M10 3h14v6h-8v3h7v5h-7v8l-6-2z" fill="#dd8132" />
              <path d="M10 3l3 2v20l-3-2z" fill="#9d501c" /><path d="M16 9h8l-2-2h-9zM16 17h7l-2-2h-8z" fill="#a9581f" />
            </Svg>
            <small>360</small>
          </FusionTile>
        </TaskButton>
        <Spacer />
        <Tray>
          <button aria-label="Show hidden icons"><Svg w={14} h={6}><path d="M1 5.500L5.500 .5 10 5.500z" fill="#fff" /></Svg></button>
          <button aria-label="Dropbox"><Svg size={16}><path d="M4 1l4 2.500L4 6 0 3.500zM12 1l4 2.500L12 6 8 3.500zM4 6.500L8 9l-4 2.500L0 9zM12 6.500L16 9l-4 2.500L8 9zM4 12.500l4-2.500 4 2.500L8 15z" fill="#fff" stroke="#444" strokeWidth=".7" /><circle cx="11.500" cy="11.500" r="4" fill="#35a544" /><path d="M9.500 11.500l1.500 1.500 2.500-3" stroke="#fff" strokeWidth="1.300" /></Svg></button>
          <button aria-label="Action Center"><Svg size={16}><path d="M1.500 1v14.500" stroke="#fff" strokeWidth="2" /><path d="M3 2h6v2h6q-1 5-6 5V8H3z" fill="#fff" stroke="#555" strokeWidth=".6" /></Svg></button>
          <button aria-label="Volume"><Svg size={16}><path d="M1 5.500h2L7.500 1v14L3 10.500H1z" fill="#fff" stroke="#444" strokeWidth=".7" /><path d="M9.500 5.500q1.500 2.500 0 5M11.500 4q3 4 0 8M13.500 2.500q4 5.500 0 11" stroke="#fff" /></Svg></button>
          <button aria-label="Network"><Svg size={16}><path d="M5.500 3.500H15v7.500H5.500M10 11v3M6.500 14.500h7.500M3 6.500v7h4M1.500 1.500h3.500v5H1.500z" stroke="#fff" strokeWidth="1.400" /></Svg></button>
        </Tray>
        <Clock><span>2:09 AM</span><span>11/8/2016</span></Clock>
      </TaskBar>
    </Page>
  )
}

const HiddenSvg = styled.svg`
  position: absolute;
`

const Page = styled.div`
  height: 100vh;
  display: flex;
  flex-direction: column;
  overflow: hidden;
`

const Spacer = styled.div`
  flex: 1;
`

const TitleBar = styled.header`
  flex: none;
  height: 23px;
  display: grid;
  grid-template-columns: 1fr auto 1fr;
  align-items: center;
  padding: 0 3px 0 2px;
  background: #f0c869;
  border-bottom: 1px solid #c9a555;
`

const Title = styled.h1`
  margin: 0;
  font: 400 14px/20px "Open Sans", sans-serif;
  color: #222;
`

const WindowButtons = styled.div`
  display: flex;
  justify-content: flex-end;
  align-self: start;
`

const WinButton = styled.button`
  width: ${({ $close }) => ($close ? 45 : 26)}px;
  height: 19px;
  display: flex;
  align-items: center;
  justify-content: center;
  background: ${({ $close }) => ($close ? '#c75050' : 'transparent')};
`

const QuickBar = styled.div`
  flex: none;
  height: 31px;
  display: flex;
  align-items: center;
  gap: 25px;
  padding: 0 13px 0 11px;
  background: #d8d8d8;
  border-bottom: 2px solid #969696;
`

const QuickButton = styled.button`
  display: flex;
  align-items: center;
  gap: 7px;
`

const History = styled.div`
  display: flex;
  gap: 15px;
`

const UserButton = styled.button`
  display: flex;
  align-items: center;
  gap: 5px;
  font-size: 11px;
  color: #444;
`

const HelpButton = styled(QuickButton)`
  gap: 4px;
`

const HelpDot = styled.span`
  width: 16px;
  height: 16px;
  border-radius: 50%;
  background: #666;
  color: #e4e4e4;
  font: 700 13px/16px "Liberation Sans", sans-serif;
`

const TabBar = styled.div`
  flex: none;
  height: 22px;
  display: flex;
  justify-content: space-between;
  align-items: stretch;
  background: #d8d8d8;
  border-bottom: 1px solid #969696;
`

const Tab = styled.div`
  width: 200px;
  display: flex;
  align-items: center;
  padding: 0 8px 0 9px;
  background: #ebebeb;
  border-right: 2px solid #969696;
`

const TabName = styled.span`
  flex: 1;
  margin-left: 9px;
  font-size: 12px;
  font-weight: 700;
  color: #5c5c5c;
`

const TabClose = styled.button`
  padding: 0;
`

const Collapse = styled.button`
  padding: 0 7px;
`

const Workspace = styled.main`
  flex: 1;
  min-height: 0;
  display: flex;
  flex-direction: column;
  padding: 4px 0 3px 4px;
  background: #ededed;
`

const Toolbar = styled.div`
  flex: none;
  align-self: flex-start;
  height: 60px;
  display: flex;
  align-items: stretch;
  background: #ddd;
`

const ModelButton = styled.button`
  width: 103px;
  display: flex;
  align-items: center;
  gap: 5px;
  padding-left: 6px;
  background: #acacac;
  color: #fff;
  font: 700 11px Roboto, sans-serif;
  &::before {
    content: "";
    width: 4px;
    height: 23px;
    margin-right: 16px;
    border: solid #8a8a8a;
    border-width: 0 1px;
  }
`

const Group = styled.div`
  width: ${({ $width }) => $width}px;
  margin: 4px 0;
  display: flex;
  flex-direction: column;
  align-items: center;
  border-right: 2px solid #c9c9c9;
  &:last-child {
    border-right: 0;
  }
`

const Tools = styled.div`
  display: flex;
  gap: 4px;
`

const Tool = styled.button`
  width: 39px;
  height: 40px;
  display: flex;
  align-items: center;
  justify-content: center;
  background: ${({ $active }) => ($active ? '#588ab4' : 'transparent')};
`

const GroupLabel = styled.button`
  display: flex;
  align-items: center;
  gap: 3px;
  font: 11px/14px Roboto, sans-serif;
  color: #3c3c3c;
`

const Body = styled.div`
  flex: 1;
  min-height: 0;
  display: flex;
  margin-top: 4px;
`

const Browser = styled.aside`
  flex: none;
  width: 300px;
`

const PanelHeader = styled.div`
  width: 300px;
  height: 25px;
  display: flex;
  align-items: center;
  padding: 0 1px 0 4px;
  background: #d0d0d0;
  border: 1px solid #a5a5a5;
`

const PanelTitle = styled.h2`
  flex: 1;
  margin: 0 0 0 11px;
  font: 400 11px Roboto, sans-serif;
  color: #666;
`

const PanelButton = styled.button`
  margin-right: 7px;
`

const Grip = styled.span`
  width: 3px;
  height: 11px;
  border: solid #888;
  border-width: 0 1px;
`

const Tree = styled.ul`
  padding-top: 5px;
`

const Row = styled.li`
  height: 20px;
  margin-bottom: 4px;
  display: flex;
  align-items: center;
  padding-left: ${({ $level }) => ($level ? 17 + $level * 18 : 16)}px;
`

const Twisty = styled.button`
  width: 15px;
  margin-right: 4px;
  display: flex;
`

const Item = styled.div`
  height: 20px;
  display: flex;
  align-items: center;
  gap: 9px;
  padding: 0 ${({ $long }) => ($long ? 3 : 9)}px 0 3px;
  background: #cacaca;
  border-left: ${({ $bar }) => ($bar ? `5px solid ${$bar}` : '0')};
`

const ItemName = styled.span`
  margin-left: 5px;
  white-space: nowrap;
`

const RootItem = styled.div`
  height: 20px;
  display: flex;
  align-items: center;
  gap: 4px;
  padding: 2px 7px 2px 2px;
  margin-left: 1px;
  background: #c6c6c6;
  input {
    appearance: none;
    width: 14px;
    height: 14px;
    margin: 0;
    border: 1px solid #222;
    border-radius: 50%;
    background: radial-gradient(#111 0 28%, #fff 38%);
  }
`

const RootName = styled.div`
  height: 16px;
  display: flex;
  align-items: center;
  gap: 9px;
  padding: 0 12px 0 3px;
  border-left: 3px solid #6e93e6;
  background: #808080;
  color: #fff;
  b {
    margin-left: 5px;
  }
`

const ModelSvg = styled.svg`
  flex: 1;
  min-width: 0;
  height: 100%;
`

const CubeText = styled.text`
  font: 700 ${({ $light }) => ($light ? 22 : 27)}px "Open Sans", sans-serif;
  text-anchor: middle;
  fill: ${({ $light }) => ($light ? '#a3a6ac' : '#9a9da3')};
`

const BottomRow = styled.div`
  flex: none;
  display: grid;
  grid-template-columns: 1fr auto 1fr;
  align-items: center;
  padding-right: 6px;
`

const NavBars = styled.div`
  display: flex;
  gap: 6px;
`

const NavBar = styled.div`
  height: 24px;
  display: flex;
  align-items: center;
  gap: ${({ $gap }) => $gap}px;
  padding: 0 3px;
  background: #c9c9c9;
`

const NavButton = styled.button`
  display: flex;
  align-items: center;
  gap: ${({ $close }) => ($close ? 2 : 4)}px;
  margin-right: ${({ $tight }) => ($tight ? '-4px' : 0)};
`

const Timeline = styled.section`
  flex: none;
  height: 51px;
  background: #cbcbcb;
`

const ScrollTrack = styled.div`
  height: 9px;
  padding-top: 2px;
  margin-left: 4px;
  display: flex;
  justify-content: flex-end;
  background: #dcdcdc;
  border-top: 1px solid #c4c4c4;
`

const ScrollThumb = styled.div`
  width: 144px;
  background: #8f8f8f;
  border-radius: 3px 0 0 3px;
`

const TimelineRow = styled.div`
  display: flex;
  padding-top: 3px;
`

const Playback = styled.div`
  width: 137px;
  display: flex;
  gap: 9px;
  padding: 7px 0 0 9px;
  align-self: flex-start;
`

const Track = styled.div`
  margin-right: -4px;
`

const Features = styled.div`
  display: flex;
  gap: 4px;
  padding-left: 7px;
`

const FeatureGroup = styled.div`
  display: flex;
  gap: 4px;
  border-top: 4px solid ${({ $kind }) => ($kind === 'plan' ? '#6a8fe8' : '#f5a271')};
`

const Feature = styled.button`
  width: 20px;
  padding-top: 4px;
  display: flex;
  flex-direction: column;
  align-items: center;
  &::after {
    content: "";
    width: 2px;
    height: 4px;
    margin-top: 4px;
    background: #666;
  }
`

const Axis = styled.div`
  display: flex;
  gap: 2px;
  padding-right: 9px;
  i {
    width: 4px;
    height: 2px;
    background: #666;
  }
  span {
    flex: 1;
    height: 2px;
    background: #666;
  }
`

const Settings = styled.button`
  align-self: flex-start;
  margin: 7px 0 0 16px;
`

const TaskBar = styled.footer`
  flex: none;
  position: relative;
  height: 40px;
  display: flex;
  align-items: stretch;
  gap: 4px;
  background: #b98a34;
  > * {
    z-index: 1;
  }
`

// backdrop painted under the taskbar buttons
const Wallpaper = styled.svg`
  && {
    position: absolute;
    inset: 0;
    width: 100%;
    height: 100%;
    z-index: 0;
  }
`

const StartButton = styled.button`
  width: 48px;
  display: flex;
  align-items: center;
  justify-content: center;
`

const TaskButton = styled.button`
  width: 58px;
  display: flex;
  align-items: center;
  justify-content: center;
  border: 1px solid ${({ $open, $active }) => ($active ? '#f6ead2' : $open ? '#dcc190' : 'transparent')};
  background: ${({ $open, $active }) => ($active ? 'rgba(255, 245, 220, 0.6)' : $open ? 'rgba(255, 245, 220, 0.25)' : 'transparent')};
`

const FusionTile = styled.span`
  display: flex;
  flex-direction: column;
  height: 32px;
  background: linear-gradient(135deg, #f2fafd, #c4e4f2);
  small {
    margin-top: -8px;
    padding-right: 4px;
    text-align: right;
    font: 700 6px/7px "Liberation Sans", sans-serif;
    color: #1583c4;
  }
`

const Tray = styled.div`
  display: flex;
  align-items: center;
  gap: 8px;
`

const Clock = styled.div`
  width: 82px;
  padding-right: 4px;
  display: flex;
  flex-direction: column;
  align-items: center;
  justify-content: center;
  font: 11px/17px "Open Sans", sans-serif;
  color: #fff;
`

export default App
